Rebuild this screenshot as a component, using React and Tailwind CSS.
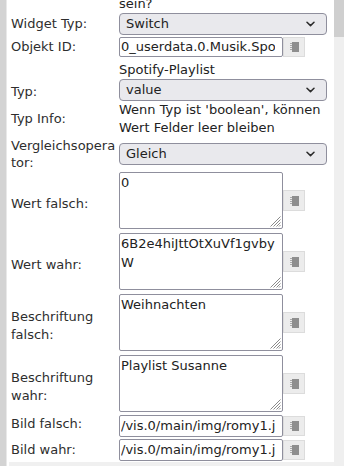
import React from 'react';

const Chevron = () => (
  <svg width="9" height="6" viewBox="0 0 9 6" className="shrink-0">
    <path d="M1 1.2 L4.5 4.6 L8 1.2" fill="none" stroke="#2b2b2b" strokeWidth="1.5" strokeLinecap="round" strokeLinejoin="round" />
  </svg>
);

const Grip = () => (
  <svg width="12" height="12" viewBox="0 0 12 12" className="absolute right-[1px] bottom-[1px]">
    <g stroke="#8a8a8a" strokeWidth="1">
      <line x1="11.5" y1="1.5" x2="1.5" y2="11.5" />
      <line x1="11.5" y1="4.5" x2="4.5" y2="11.5" />
      <line x1="11.5" y1="7.5" x2="7.5" y2="11.5" />
      <line x1="11.5" y1="10" x2="10" y2="11.5" />
    </g>
  </svg>
);

const PickButton = ({ tall }) => (
  <div
    className={
      tall
        ? 'w-[22px] h-[21px] shrink-0 bg-[#ececec] border border-[#dcdcdc] flex items-center justify-center'
        : 'w-[22px] h-[20px] shrink-0 bg-[#ececec] border border-[#dcdcdc] flex items-center justify-center'
    }
  >
    <svg width="9" height="10" viewBox="0 0 9 10">
      <rect x="2" y="0" width="7" height="10" fill="#8e8e8e" />
      <g fill="#a9a9a9">
        <rect x="0" y="1" width="2" height="1" />
        <rect x="0" y="3" width="2" height="1" />
        <rect x="0" y="5" width="2" height="1" />
        <rect x="0" y="7" width="2" height="1" />
      </g>
    </svg>
  </div>
);

const Select = ({ value }) => (
  <div className="w-[208px] h-[22px] bg-[#e9e9ed] border border-[#8f8f9d] rounded-[4px] flex items-center justify-between pl-[6px] pr-[11px]">
    <span className="leading-[18px]">{value}</span>
    <Chevron />
  </div>
);

const TextInput = ({ value, h = 'h-[22px]' }) => (
  <div className="flex items-center">
    <div className={`w-[164px] ${h} bg-white border border-[#8f8f9d] rounded-[2px] pl-[1px] flex items-center`}>
      <div className="w-[154px] overflow-hidden whitespace-nowrap leading-[18px]">{value}</div>
    </div>
    <PickButton tall={false} />
  </div>
);

const Area = ({ value }) => (
  <div className="flex items-center">
    <div className="relative w-[164px] h-[57px] bg-white border border-[#8f8f9d] rounded-[2px] pl-[1px] pr-[2px] leading-[19px] break-all">
      {value}
      <Grip />
    </div>
    <PickButton tall />
  </div>
);

const Label = ({ children, lead = 'leading-[18px]' }) => (
  <div className={`w-[108px] shrink-0 pr-[1px] break-words text-[#2e2e2e] ${lead}`}>{children}</div>
);

export default function App() {
  const areas = [
    { label: 'Wert falsch:', value: '0' },
    { label: 'Wert wahr:', value: '6B2e4hiJttOtXuVf1gvbyW' },
    { label: 'Beschriftung falsch:', value: 'Weihnachten' },
    { label: 'Beschriftung wahr:', value: 'Playlist Susanne' },
  ];

  return (
    <div className="flex w-[344px] h-[466px] overflow-hidden bg-white font-['DejaVu_Sans',sans-serif] text-[13px] text-[#222]">
      <div className="w-[7px] shrink-0 bg-[#d3d3d3] border-r border-[#e8e8e8]" />

      <div className="flex-1 pl-[4px]">
        <div className="flex h-[12px]">
          <div className="w-[108px] shrink-0" />
          <div className="-mt-[4px] leading-[16px]">sein?</div>
        </div>

        <div className="flex h-[24px] items-center">
          <Label>Widget Typ:</Label>
          <Select value="Switch" />
        </div>

        <div className="flex h-[22px] items-center">
          <Label>Objekt ID:</Label>
          <TextInput value="0_userdata.0.Musik.Spotify" h="h-[20px]" />
        </div>

        <div className="flex h-[20px]">
          <div className="w-[108px] shrink-0" />
          <div className="pt-[4px] leading-[16px]">Spotify-Playlist</div>
        </div>

        <div className="flex h-[23px] items-end">
          <Label>Typ:</Label>
          <Select value="value" />
        </div>

        <div className="flex h-[36px] items-center">
          <Label>Typ Info:</Label>
          <div className="leading-[18px]">
            Wenn Typ ist 'boolean', können
            <br />
            Wert Felder leer bleiben
          </div>
        </div>

        <div className="flex h-[34px] items-center">
          <Label lead="leading-[17px]">Vergleichsoperator:</Label>
          <Select value="Gleich" />
        </div>

        {areas.map((a) => (
          <div key={a.label} className="flex h-[61px] items-start pt-[1px]">
            <div className="h-[57px] pt-[6px] flex items-center">
              <Label>{a.label}</Label>
            </div>
            <Area value={a.value} />
          </div>
        ))}

        <div className="flex h-[23px] items-start">
          <Label>Bild falsch:</Label>
          <TextInput value="/vis.0/main/img/romy1.jpg" />
        </div>

        <div className="flex h-[24px] items-center">
          <Label>Bild wahr:</Label>
          <TextInput value="/vis.0/main/img/romy1.jpg" />
        </div>

        <div className="-ml-[2px] h-[10px] bg-[#f0f0f0]" />
      </div>

      <div className="w-[10px] shrink-0 flex flex-col bg-[#efefef]">
        <div className="h-[37px] bg-[#cfcfcf]" />
      </div>
    </div>
  );
}
